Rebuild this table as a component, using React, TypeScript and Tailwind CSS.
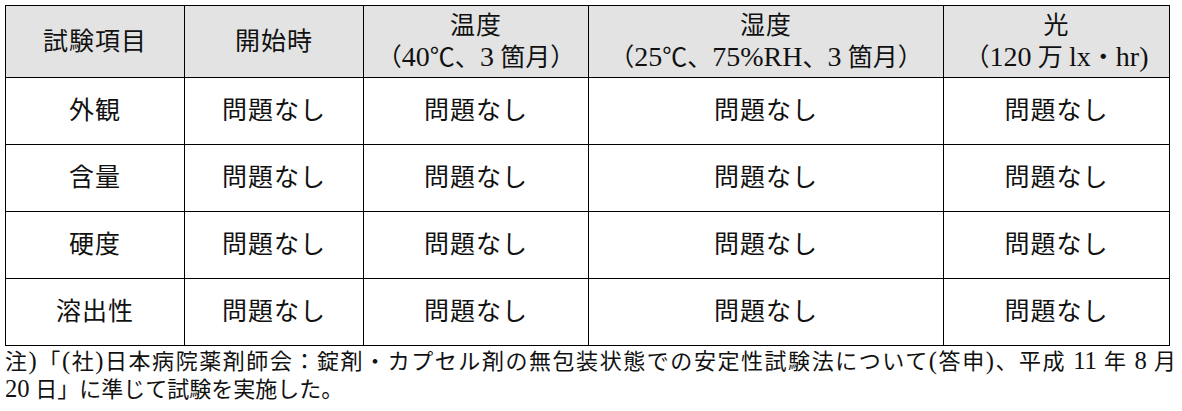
import React from "react";

type Row = {
  item: string;
  values: string[];
};

const rows: Row[] = [
  { item: "外観", values: ["問題なし", "問題なし", "問題なし", "問題なし"] },
  { item: "含量", values: ["問題なし", "問題なし", "問題なし", "問題なし"] },
  { item: "硬度", values: ["問題なし", "問題なし", "問題なし", "問題なし"] },
  { item: "溶出性", values: ["問題なし", "問題なし", "問題なし", "問題なし"] },
];

const fontStack = {
  fontFamily: '"Liberation Serif", "Noto Sans CJK JP", serif',
};

const cell = "border border-black text-center align-middle p-0";

// latin runs are set a bit larger so they sit like the Mincho/Times mix
const L = ({ children }: { children: React.ReactNode }) => (
  <span className="text-[1.12em]">{children}</span>
);

export default function App() {
  return (
    <div className="bg-white w-[1182px] h-[411px] pt-[5px] pl-[5px] text-[#111]" style={fontStack}>
      <table className="border-collapse table-fixed w-[1164px] text-[25px] tracking-[1px]">
        <colgroup>
          <col className="w-[179px]" />
          <col className="w-[179px]" />
          <col className="w-[225px]" />
          <col className="w-[355px]" />
          <col className="w-[226px]" />
        </colgroup>
        <thead>
          <tr className="h-[72px] bg-[#e3e3e3] leading-[31px]">
            <th className={`${cell} font-normal`}>試験項目</th>
            <th className={`${cell} font-normal`}>開始時</th>
            <th className={`${cell} font-normal`}>
              <div>温度</div>
              <div className="tracking-normal">
                （<L>40</L>℃、<L>3</L> 箇月）
              </div>
            </th>
            <th className={`${cell} font-normal`}>
              <div>湿度</div>
              <div className="tracking-normal">
                （<L>25</L>℃、<L>75%RH</L>、<L>3</L> 箇月）
              </div>
            </th>
            <th className={`${cell} font-normal`}>
              <div>光</div>
              <div className="tracking-normal">
                （<L>120</L> 万 <L>lx</L>・<L>hr)</L>
              </div>
            </th>
          </tr>
        </thead>
        <tbody>
          {rows.map((row) => (
            <tr key={row.item} className="h-[67px]">
              <td className={cell}>{row.item}</td>
              {row.values.map((v, i) => (
                <td key={i} className={cell}>
                  {v}
                </td>
              ))}
            </tr>
          ))}
        </tbody>
      </table>
      <div className="w-[1171px] text-[22px] leading-[27px] mt-[1px]">
        <div className="[text-align-last:justify]">
          注<L>)</L>「<L>(</L>社<L>)</L>日本病院薬剤師会：錠剤・カプセル剤の無包装状態での安定性試験法について<L>(</L>答申<L>)</L>、平成 <L>11</L> 年 <L>8</L> 月
        </div>
        <div>
          <L>20</L> 日」に準じて試験を実施した。
        </div>
      </div>
    </div>
  );
}
